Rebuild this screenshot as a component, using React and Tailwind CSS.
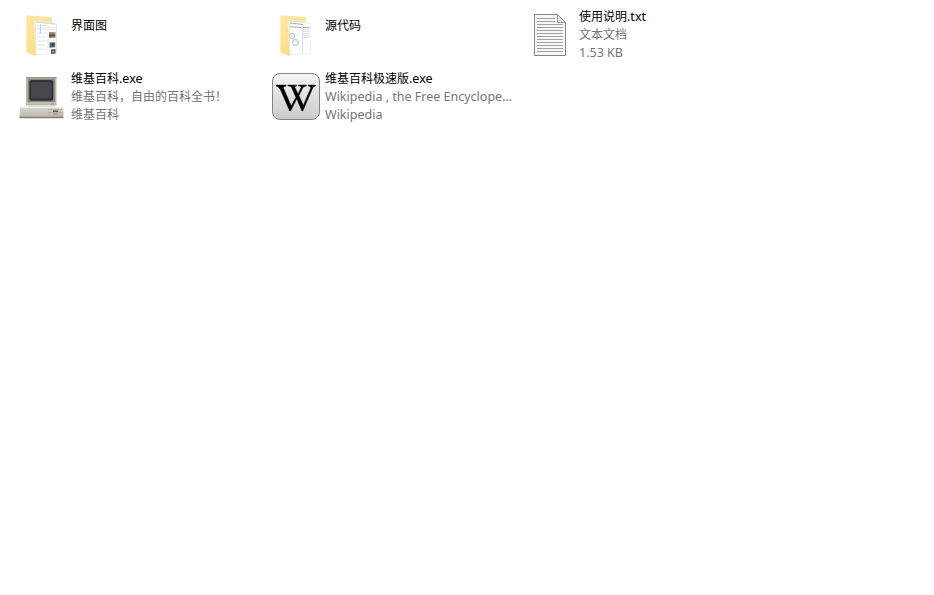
import { FaWikipediaW } from "react-icons/fa";

function FolderIcon({ children }) {
  return (
    <svg className="h-12 w-12" viewBox="0 0 48 48">
      <defs>
        <linearGradient id="folder" x1="0" x2="1" y1="0" y2="1">
          <stop offset="0" stopColor="#ffe8a6" />
          <stop offset="1" stopColor="#fbdc86" />
        </linearGradient>
      </defs>
      <path d="M8.500 4.300L34 6.300V14H14z" fill="#fbe3a0" />
      <path d="M8.300 4.300L14 8.500l3 4v32.500L8.300 41.500z" fill="url(#folder)" />
      <path d="M15.500 9.800L38.500 12.500v29.500L17.500 44z" fill="#fdfdfd" stroke="#e2e5e7" strokeWidth=".6" />
      {children}
      <path d="M14.800 10.500L17.200 12.800V45" fill="none" stroke="#f5d681" strokeWidth=".8" />
    </svg>
  );
}

function ScreensFolder() {
  return (
    <FolderIcon>
      <path d="M17 11l20 2" stroke="#c9d0d5" strokeWidth=".8" />
      <path d="M19 14.500h10M19 18h10M19 22h10M19 26h9M19 30h10M19 34h9M19 38h10" stroke="#dce4ee" strokeWidth=".9" />
      <path d="M22.500 13v10" stroke="#b5d0ec" strokeWidth=".9" />
      <path d="M30 14v28M38.500 13v29" stroke="#e2e4e6" strokeWidth=".8" />
      <path d="M31 16.500h6.500M31 18.500h6.500" stroke="#e0e3e6" strokeWidth=".7" />
      <path d="M31 21l6.500.2v5.500l-6.500.3z" fill="#9a8676" />
      <path d="M31 23.500l6-.3v2l-6 .3z" fill="#5e5148" />
      <path d="M31.500 31.500l5.700-.3v5l-5.700.5z" fill="#5d666b" />
      <path d="M34 32.500h2v2h-2z" fill="#2d3336" />
      <path d="M33 38.500l4.500-.4v4.500l-4.500.4z" fill="#4d5456" />
      <path d="M34 40l2-.3v1.500l-2 .3z" fill="#b2b9bb" />
    </FolderIcon>
  );
}

function SourceFolder() {
  return (
    <FolderIcon>
      <path d="M18 12l13 1.500M17.500 15.800l12 .7M31 16.500h6.500" stroke="#a3acb2" strokeWidth="1" />
      <path d="M31 18.500h6.500M31 20.500h6.500M31 22.500h6.500M31 24.500h6.500M31 26.500h6.500" stroke="#d9dddf" strokeWidth="1" />
      <circle cx="20" cy="25" r="2.600" fill="#f5f7f8" stroke="#c7cfd5" strokeWidth="1.200" />
      <circle cx="23.500" cy="31.500" r="2.900" fill="#f5f7f8" stroke="#c7cfd5" strokeWidth="1.200" />
      <path d="M30.500 14.500v27.500" stroke="#d5dadd" strokeWidth=".8" />
    </FolderIcon>
  );
}

function TextFileIcon() {
  return (
    <svg className="h-12 w-12" viewBox="0 0 48 48">
      <path d="M8.500 3.500h23l8 8v33h-31z" fill="#f8f8f8" stroke="#858585" />
      <path d="M31.500 3.500v8h8z" fill="#e2e2e2" stroke="#909090" strokeWidth=".9" />
      <path d="M11 7.500h18M11 10.500h18M11 13.500h26M11 16.500h26M11 19.500h26M11 22.500h26M11 25.500h26M11 28.500h26M11 31.500h26M11 34.500h26M11 37.500h26M11 40.500h26" stroke="#a2a2a2" />
    </svg>
  );
}

function ComputerIcon() {
  return (
    <svg className="h-12 w-12" viewBox="0 0 48 48">
      <defs>
        <linearGradient id="base" x1="0" x2="0" y1="0" y2="1">
          <stop offset="0" stopColor="#dad7cd" />
          <stop offset="1" stopColor="#b9b5a9" />
        </linearGradient>
      </defs>
      <path d="M8 4h30.500v28.500H8z" fill="#b9b5aa" />
      <path d="M8 4h30.500v1.500H8z" fill="#99958b" />
      <path d="M9.800 6h27v23h-27z" fill="#8a877f" />
      <rect x="11.300" y="7" width="24" height="20.800" rx="2.500" fill="#303236" />
      <rect x="13" y="9" width="20.500" height="16.500" rx="2.500" fill="#44484d" />
      <path d="M9 30.200h28.500" stroke="#cbc7bc" />
      <path d="M33 31h3" stroke="#8f8b80" />
      <path d="M10 33.200h27" stroke="#dddad2" strokeWidth="1.200" />
      <path d="M2 34.500h43.500v10H1.500z" fill="url(#base)" />
      <path d="M30 36.500h14M30 39.500h14" stroke="#aaa69a" strokeWidth=".7" />
      <path d="M35 37.500h5v1.500h-5z" fill="#5a564e" />
      <path d="M35 41h5" stroke="#8c877c" strokeWidth=".8" />
      <path d="M1.500 43.800h44v1.500h-44z" fill="#858075" />
    </svg>
  );
}

function WikipediaIcon() {
  return (
    <div className="mb-px flex h-[47px] w-12 items-center justify-center rounded-[8px] border border-[#858585] bg-gradient-to-b from-[#f5f5f5] to-[#cbcbcb]">
      <FaWikipediaW className="mt-[2px] h-8 w-10 stroke-black stroke-[8] text-black" />
    </div>
  );
}

function Latin({ children }) {
  return <span className="text-[12.5px] tracking-[0px]">{children}</span>;
}

function Item({ icon, name, lines = [] }) {
  return (
    <div className="flex h-[62px] w-[254px] items-center">
      <div className="flex h-12 w-12 shrink-0 items-center justify-center">{icon}</div>
      <div className="ml-[5px] flex h-[54px] flex-col whitespace-nowrap text-[12px] leading-[18px] text-[#757575]">
        <div className={lines.length ? "h-[18px] text-black" : "mt-[9px] h-[18px] text-black"}>{name}</div>
        {lines.map((line, i) => (
          <div key={i} className="h-[18px]">{line}</div>
        ))}
      </div>
    </div>
  );
}

export default function App() {
  return (
    <main className="h-[595px] w-[934px] overflow-hidden bg-white pl-[18px] pt-[4px] font-['Noto_Sans','Noto_Sans_CJK_SC',sans-serif]">
      <div className="grid w-[762px] grid-cols-[254px_254px_254px]">
        <Item icon={<ScreensFolder />} name="界面图" />
        <Item icon={<SourceFolder />} name="源代码" />
        <Item
          icon={<TextFileIcon />}
          name={<>使用说明<Latin>.txt</Latin></>}
          lines={["文本文档", <Latin>1.53 KB</Latin>]}
        />
        <Item
          icon={<ComputerIcon />}
          name={<>维基百科<Latin>.exe</Latin></>}
          lines={["维基百科，自由的百科全书！", "维基百科"]}
        />
        <Item
          icon={<WikipediaIcon />}
          name={<>维基百科极速版<Latin>.exe</Latin></>}
          lines={[<Latin>Wikipedia , the Free Encyclope...</Latin>, <Latin>Wikipedia</Latin>]}
        />
      </div>
    </main>
  );
}
